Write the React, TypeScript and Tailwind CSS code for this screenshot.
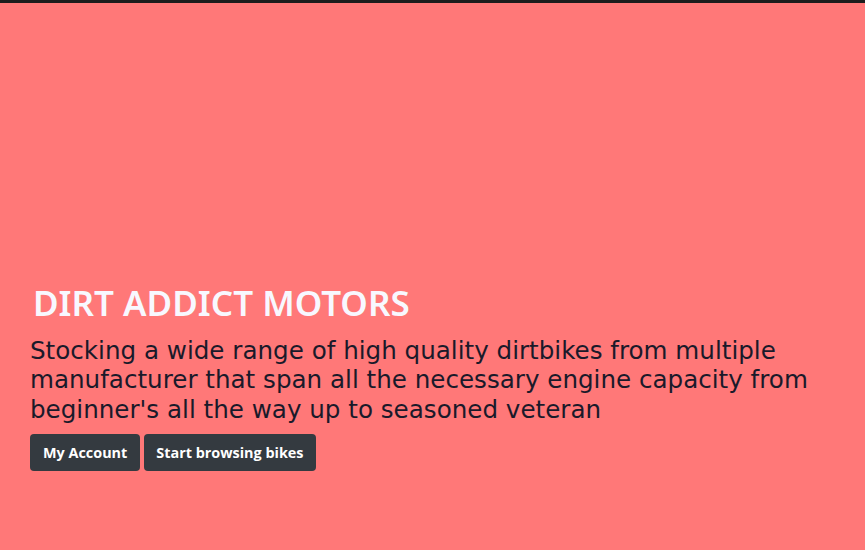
export default function App() {
  return (
    <div className="h-[550px] w-full bg-[#ff7878] border-t-[3px] border-[#1c1c1c] flex flex-col justify-end pb-[79px] px-[30px] font-['DejaVu_Sans',sans-serif]">
      <h1 className="font-['Noto_Sans',sans-serif] text-[35px] leading-[40px] font-semibold text-[#f8f8ff] pl-[3px] mb-[13px]">DIRT ADDICT MOTORS</h1>
      <p className="text-[24.6px] leading-[29.5px] text-[#1a1a2a] mb-[10px]">
        Stocking a wide range of high quality dirtbikes from multiple manufacturer that span all the necessary engine capacity from beginner's all the way up to seasoned veteran
      </p>
      <div className="flex gap-[4px] font-['Open_Sans',sans-serif]">
        <button className="h-[37px] px-[13px] rounded-[4px] bg-[#343a40] text-white text-[14.4px] font-bold">My Account</button>
        <button className="h-[37px] px-[12px] rounded-[4px] bg-[#343a40] text-white text-[14.4px] font-bold">Start browsing bikes</button>
      </div>
    </div>
  );
}
